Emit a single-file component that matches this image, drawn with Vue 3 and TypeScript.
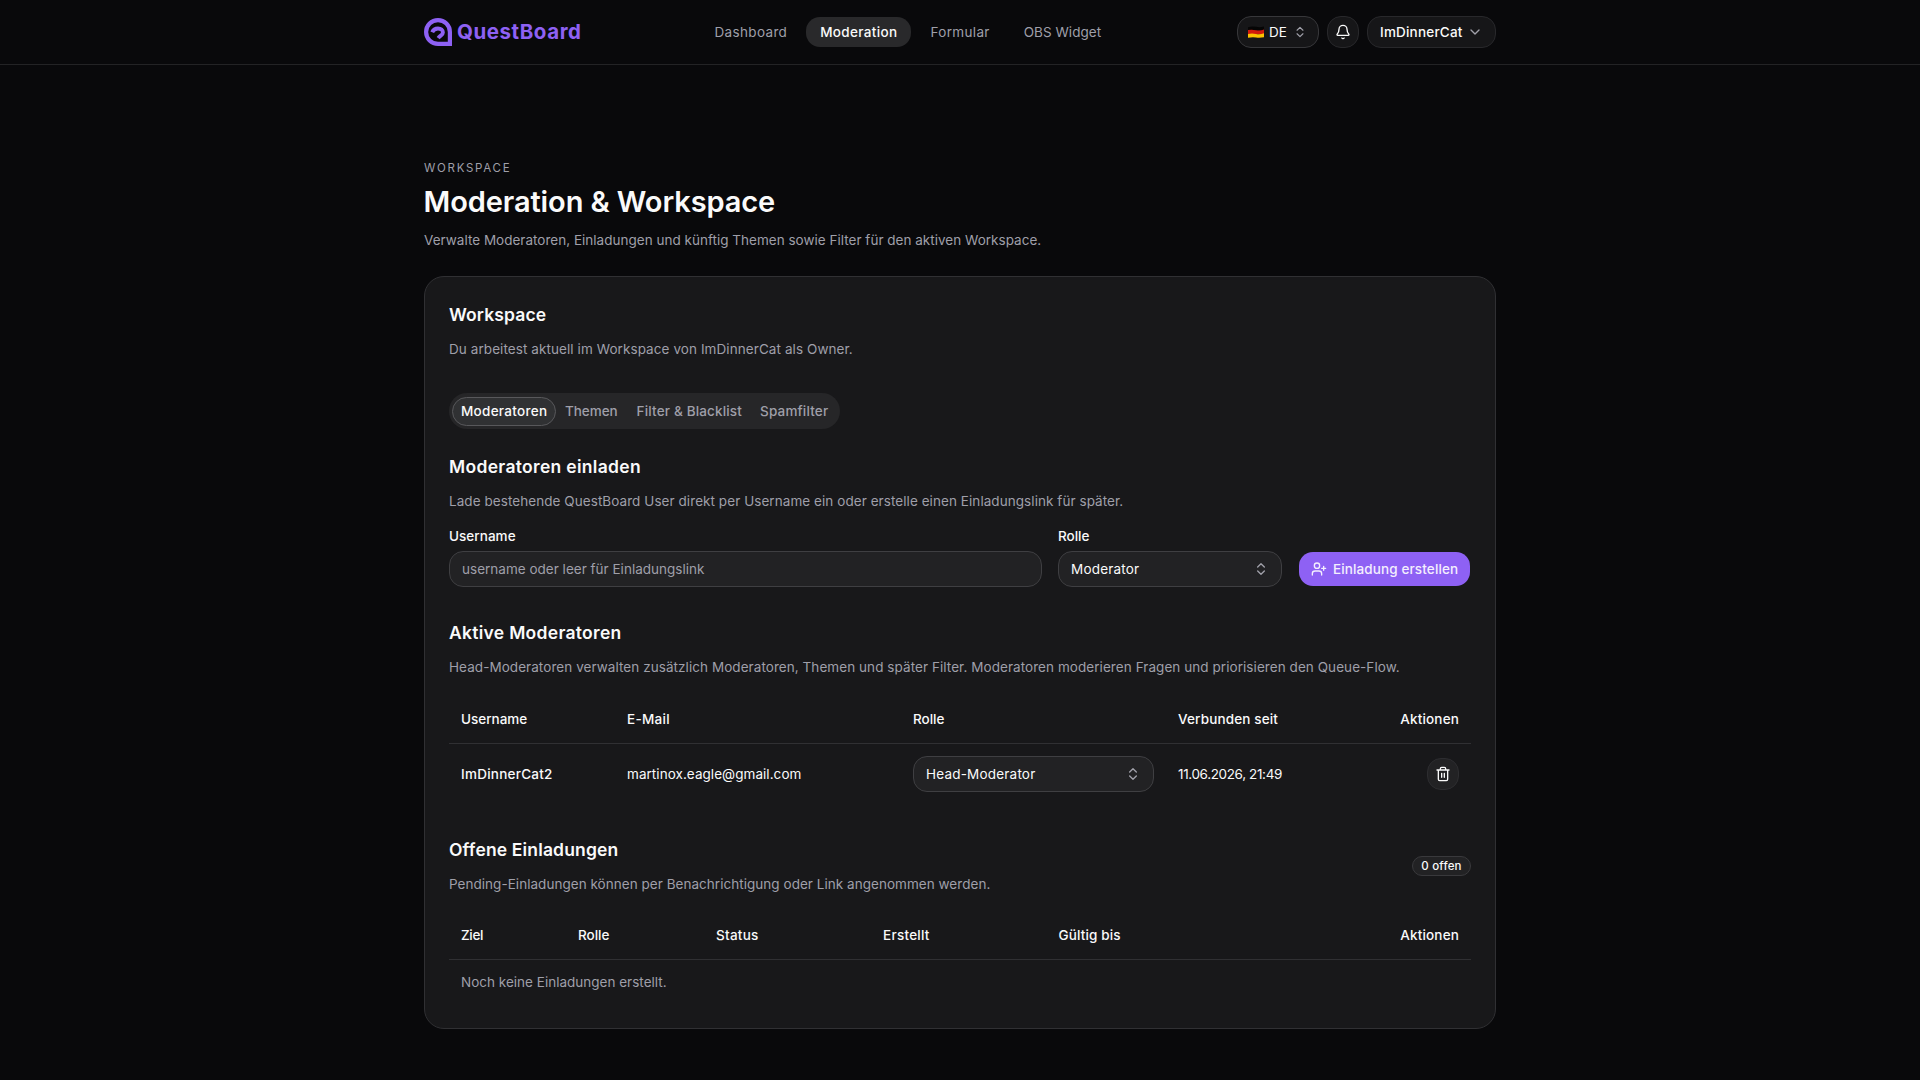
<script setup lang="ts">
import { ref } from 'vue'

interface NavItem { key: string; label: string }

const nav: NavItem[] = [
  { key: 'dashboard', label: 'Dashboard' },
  { key: 'moderation', label: 'Moderation' },
  { key: 'formular', label: 'Formular' },
  { key: 'widget', label: 'OBS Widget' },
]
const activeNav = ref('moderation')

const tabs: NavItem[] = [
  { key: 'mods', label: 'Moderatoren' },
  { key: 'topics', label: 'Themen' },
  { key: 'filter', label: 'Filter & Blacklist' },
  { key: 'spam', label: 'Spamfilter' },
]
const activeTab = ref('mods')

const moderators = [
  { name: 'ImDinnerCat2', mail: 'martinox.eagle@gmail.com', role: 'Head-Moderator', since: '11.06.2026, 21:49' },
]
</script>

<template>
  <div class="page">
    <header class="header">
      <div class="bar">
        <a class="brand">
          <svg width="28" height="28" viewBox="0 0 28 28" fill="none" stroke="currentColor">
            <path d="M14 2.1A11.9 11.9 0 0 0 14 25.9H25.9V14A11.9 11.9 0 0 0 14 2.1Z" stroke-width="4.2" />
            <path d="M8.2 14.3C9.2 11.8 11.300 10.500 14 10.500c2.900 0 4.900 1.700 4.900 3.900 0 2.700-2.600 2.900-4.700 5.700" stroke-width="3.900" />
          </svg>
          <span>QuestBoard</span>
        </a>
        <nav class="nav">
          <a v-for="n in nav" :key="n.key" class="nav-item" :class="[n.key, { active: n.key === activeNav }]" @click="activeNav = n.key">{{ n.label }}</a>
        </nav>
        <div class="tools">
          <button class="chip lang">
            <svg class="flag" width="16" height="12" viewBox="0 0 16 12">
              <path d="M0 1.200Q4 0 8 .8T16 .5V4.500H0Z" fill="#050505" />
              <path d="M0 4Q4 3.200 8 4.200T16 3.600V8H0Z" fill="#d21a0c" />
              <path d="M0 8Q4 7 8 8T16 7.200V11.200Q12 12 8 11.500T0 11.800Z" fill="#fcc201" />
            </svg>
            <span>DE</span>
            <svg class="icon muted" width="14" height="14" viewBox="0 0 24 24"><path d="m7 15 5 5 5-5M7 9l5-5 5 5" /></svg>
          </button>
          <button class="chip round">
            <svg class="icon" width="16" height="16" viewBox="0 0 24 24"><path d="M10.268 21a2 2 0 0 0 3.464 0M3.262 15.326A1 1 0 0 0 4 17h16a1 1 0 0 0 .740-1.673C19.410 13.956 18 12.499 18 8A6 6 0 0 0 6 8c0 4.499-1.411 5.956-2.738 7.326" /></svg>
          </button>
          <button class="chip user">
            <span>ImDinnerCat</span>
            <svg class="icon muted" width="16" height="16" viewBox="0 0 24 24"><path d="m6 9 6 6 6-6" /></svg>
          </button>
        </div>
      </div>
    </header>

    <main class="main">
      <p class="eyebrow">WORKSPACE</p>
      <h1>Moderation &amp; Workspace</h1>
      <p class="lead intro">Verwalte Moderatoren, Einladungen und künftig Themen sowie Filter für den aktiven Workspace.</p>

      <section class="card">
        <h2 class="h-workspace">Workspace</h2>
        <p class="lead owner">Du arbeitest aktuell im Workspace von ImDinnerCat als Owner.</p>

        <div class="tabs">
          <button v-for="t in tabs" :key="t.key" class="tab" :class="[t.key, { active: t.key === activeTab }]" @click="activeTab = t.key">{{ t.label }}</button>
        </div>

        <h2 class="h-invite">Moderatoren einladen</h2>
        <p class="lead">Lade bestehende QuestBoard User direkt per Username ein oder erstelle einen Einladungslink für später.</p>

        <div class="form">
          <div class="field grow">
            <label>Username</label>
            <input class="control" type="text" placeholder="username oder leer für Einladungslink" />
          </div>
          <div class="field role">
            <label class="tight">Rolle</label>
            <div class="control select">
              <span>Moderator</span>
              <svg class="icon muted" width="16" height="16" viewBox="0 0 24 24"><path d="m7 15 5 5 5-5M7 9l5-5 5 5" /></svg>
            </div>
          </div>
          <button class="primary">
            <svg class="icon" width="16" height="16" viewBox="0 0 24 24"><path d="M16 21v-2a4 4 0 0 0-4-4H6a4 4 0 0 0-4 4v2M19 8v6M22 11h-6" /><circle cx="9" cy="7" r="4" /></svg>
            <span>Einladung erstellen</span>
          </button>
        </div>

        <h2 class="h-active">Aktive Moderatoren</h2>
        <p class="lead">Head-Moderatoren verwalten zusätzlich Moderatoren, Themen und später Filter. Moderatoren moderieren Fragen und priorisieren den Queue-Flow.</p>

        <table class="mods-table">
          <thead>
            <tr><th class="tight">Username</th><th class="mail">E-Mail</th><th class="tight">Rolle</th><th>Verbunden seit</th><th class="end">Aktionen</th></tr>
          </thead>
          <tbody>
            <tr v-for="m in moderators" :key="m.name">
              <td class="name">{{ m.name }}</td>
              <td>{{ m.mail }}</td>
              <td>
                <div class="control select">
                  <span>{{ m.role }}</span>
                  <svg class="icon muted" width="16" height="16" viewBox="0 0 24 24"><path d="m7 15 5 5 5-5M7 9l5-5 5 5" /></svg>
                </div>
              </td>
              <td class="date">{{ m.since }}</td>
              <td class="end">
                <button class="trash">
                  <svg class="icon" width="16" height="16" viewBox="0 0 24 24"><path d="M3 6h18M19 6v14a2 2 0 0 1-2 2H7a2 2 0 0 1-2-2V6M8 6V4a2 2 0 0 1 2-2h4a2 2 0 0 1 2 2v2M10 11v6M14 11v6" /></svg>
                </button>
              </td>
            </tr>
          </tbody>
        </table>

        <div class="open-head">
          <div>
            <h2 class="h-open">Offene Einladungen</h2>
            <p class="lead pending">Pending-Einladungen können per Benachrichtigung oder Link angenommen werden.</p>
          </div>
          <span class="badge">0 offen</span>
        </div>

        <table class="invites-table">
          <thead>
            <tr><th class="ziel">Ziel</th><th class="tight">Rolle</th><th class="wide">Status</th><th class="wide">Erstellt</th><th>Gültig bis</th><th class="end">Aktionen</th></tr>
          </thead>
          <tbody>
            <tr><td class="empty" colspan="6">Noch keine Einladungen erstellt.</td></tr>
          </tbody>
        </table>
      </section>
    </main>
  </div>
</template>

<style>
html, body { margin: 0; background: #09090b; }
</style>

<style scoped>
* { box-sizing: border-box; }
.page {
  height: 1080px;
  overflow: hidden;
  background: #09090b;
  color: #fafafa;
  font: 400 13.5px/20px Inter, "Open Sans", sans-serif;
}
button, input { font: inherit; color: inherit; margin: 0; }
p, h1, h2 { margin: 0; }
svg { flex: none; display: block; }
.icon { fill: none; stroke: currentColor; stroke-width: 2; stroke-linecap: round; stroke-linejoin: round; }
.muted { color: #a1a1aa; }

.header { height: 65px; border-bottom: 1px solid #232325; }
.bar, .main { width: 1072px; margin: 0 auto; }
.bar { height: 64px; display: grid; grid-template-columns: 276px 1fr auto; align-items: center; }
.brand { display: flex; align-items: center; gap: 5px; color: #8e61f4; font-size: 20.5px; font-weight: 700; letter-spacing: .56px; }
.nav { display: flex; gap: 5px; }
.nav-item { height: 30px; padding: 0 14px; border-radius: 14px; line-height: 31px; color: #9f9fa9; letter-spacing: .34px; white-space: nowrap; }
.nav-item.dashboard { padding-left: 14.500px; }
.nav-item.widget { padding-left: 15px; letter-spacing: .04px; }
.nav-item.active { background: #29292b; color: #fafafa; font-weight: 500; }
.tools { display: flex; gap: 8px; }
.chip { display: flex; align-items: center; height: 32px; border: 1px solid #28282b; border-radius: 14px; background: #161618; padding: 0; }
.lang { width: 82px; padding-left: 10px; border-color: #37373a; }
.lang .flag { margin-right: 5px; }
.lang span { width: 24px; text-align: left; }
.round { width: 32px; justify-content: center; }
.user { width: 129px; padding-left: 12px; gap: 4px; font-weight: 500; letter-spacing: .2px; }

.main { padding-top: 95px; }
.eyebrow { font-size: 11.5px; line-height: 16px; letter-spacing: 1.72px; color: #9f9fa9; }
h1 { margin-top: 8px; font-size: 29px; line-height: 36px; font-weight: 600; letter-spacing: -.1px; text-indent: -.5px; }
.lead { margin-top: 8px; line-height: 24px; color: #9f9fa9; letter-spacing: .063px; white-space: nowrap; }
.lead.intro { letter-spacing: .015px; }
.lead.owner { letter-spacing: .08px; }
.lead.pending { letter-spacing: .036px; }

.card { margin-top: 24px; height: 753px; padding: 24px; border: 1px solid #303033; border-radius: 20px; background: #18181a; }
h2 { font-size: 17.5px; line-height: 28px; font-weight: 600; }
.h-workspace { letter-spacing: .12px; }
.h-invite { letter-spacing: .31px; margin-top: 24px; }
.h-active { letter-spacing: .29px; margin-top: 32px; }
.h-open { letter-spacing: .154px; }

.tabs { display: flex; align-items: center; width: 391px; height: 36px; margin-top: 32px; padding: 3px; border-radius: 18px; background: #262628; }
.tab { height: 29px; padding: 0 8px; border: 1px solid transparent; border-radius: 14.500px; background: none; color: #9f9fa9; font-weight: 500; white-space: nowrap; letter-spacing: .16px; }
.tab.mods { width: 104px; letter-spacing: .28px; }
.tab.topics { letter-spacing: -.05px; }
.tab.filter { padding-left: 9px; }
.tab.active { background: #303133; border-color: #58585b; color: #fafafa; }

.form { display: flex; align-items: flex-end; margin-top: 16px; }
.field label { display: block; margin-bottom: 8px; line-height: 14px; font-weight: 500; letter-spacing: .04px; }
.field label.tight { letter-spacing: 0; }
.grow { width: 593px; margin-right: 16px; }
.role { width: 224px; margin-right: 17px; }
.control { display: block; width: 100%; height: 36px; padding: 0 12px; border: 1px solid #3f3f42; border-radius: 14px; background: #222224; outline: none; letter-spacing: .013px; }
.control::placeholder { color: #9f9fa9; opacity: 1; }
.select { display: flex; align-items: center; justify-content: space-between; letter-spacing: .2px; }
.primary { display: flex; align-items: center; width: 171px; height: 34px; margin-bottom: 1px; padding: 0 0 0 12px; gap: 6px; border: 0; border-radius: 14px; background: #8e61f4; color: #f4effe; font-weight: 500; letter-spacing: .12px; white-space: nowrap; }

table { width: 1022px; border-collapse: separate; border-spacing: 0; table-layout: fixed; }
th, td { padding: 0 12px; text-align: left; white-space: nowrap; }
th { height: 49px; border-bottom: 1px solid #303033; font-weight: 500; letter-spacing: .15px; }
.end { text-align: right; }
.mods-table { margin-top: 16px; }
.mods-table th:nth-child(1) { width: 166px; }
.mods-table th:nth-child(2) { width: 286px; }
.mods-table th:nth-child(3) { width: 265px; }
.mods-table th:nth-child(4) { width: 170px; }
.mods-table td { height: 60px; letter-spacing: .05px; }
.mods-table .select { letter-spacing: .2px; }
.mods-table td.name { font-weight: 500; letter-spacing: .25px; }
.mods-table td.date { letter-spacing: -.36px; }
th.mail { letter-spacing: .3px; }
th.tight { letter-spacing: 0; }
th.wide { letter-spacing: .26px; }
th.ziel { letter-spacing: -.32px; }
.trash { display: inline-flex; align-items: center; justify-content: center; width: 32px; height: 32px; padding: 0; border: 1px solid #2d2d30; border-radius: 14px; background: #222224; vertical-align: middle; }

.open-head { display: flex; align-items: center; justify-content: space-between; height: 60px; margin-top: 32px; }
.badge { width: 59px; height: 20px; border: 1px solid #39393c; border-radius: 10px; background: #222224; font-size: 11.5px; line-height: 19px; font-weight: 500; letter-spacing: .2px; text-align: center; }
.invites-table { margin-top: 15px; }
.invites-table th:nth-child(1) { width: 117px; }
.invites-table th:nth-child(2) { width: 138px; }
.invites-table th:nth-child(3) { width: 167px; }
.invites-table th:nth-child(4) { width: 175.5px; }
.invites-table th:nth-child(5) { width: 300px; }
.invites-table td { height: 44px; color: #9f9fa9; letter-spacing: .01px; }
</style>
